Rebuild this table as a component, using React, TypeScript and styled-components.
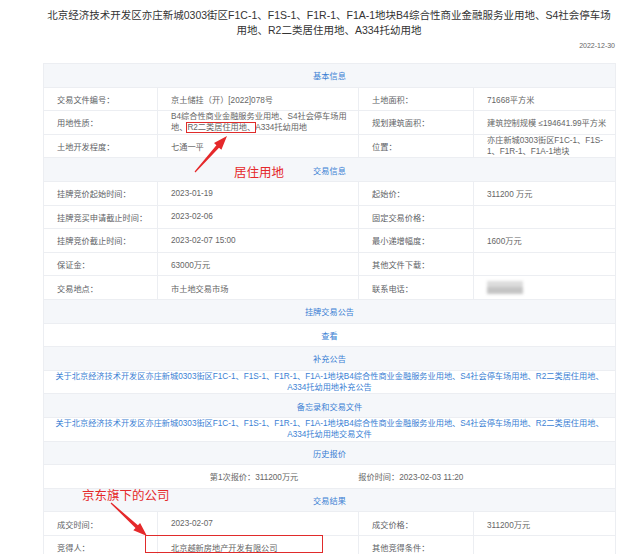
import * as React from "react";
import styled, { createGlobalStyle } from "styled-components";

const GlobalStyle = createGlobalStyle`
    html, body {
        margin: 0;
        padding: 0;
        background: #fff;
    }
    body {
        font-family: "Liberation Sans", "Noto Sans CJK SC", sans-serif;
    }
`;

type Point = { x: number; y: number };

// tapered red arrow, like the ones drawn in a screenshot editor
const arrowPoints = (tail: Point, tip: Point) => {
    const dx = tip.x - tail.x;
    const dy = tip.y - tail.y;
    const len = Math.sqrt(dx * dx + dy * dy);
    const ux = dx / len;
    const uy = dy / len;
    const nx = -uy;
    const ny = ux;
    const headLen = 14;
    const headHalf = 5;
    const base = { x: tip.x - ux * headLen, y: tip.y - uy * headLen };
    const pts: Point[] = [
        { x: tail.x + nx * 0.6, y: tail.y + ny * 0.6 },
        { x: base.x + nx * 1.8, y: base.y + ny * 1.8 },
        { x: base.x + nx * headHalf, y: base.y + ny * headHalf },
        tip,
        { x: base.x - nx * headHalf, y: base.y - ny * headHalf },
        { x: base.x - nx * 1.8, y: base.y - ny * 1.8 },
        { x: tail.x - nx * 0.6, y: tail.y - ny * 0.6 },
    ];
    return pts.map((p) => `${p.x.toFixed(1)},${p.y.toFixed(1)}`).join(" ");
};

const basicRows = [
    ["交易文件编号：", "京土储挂（开）[2022]078号", "土地面积：", "71668平方米"],
];

const tradeRows = [
    ["挂牌竞价起始时间：", "2023-01-19", "起始价：", "311200 万元"],
    ["挂牌竞买申请截止时间：", "2023-02-06", "固定交易价格：", ""],
    ["挂牌竞价截止时间：", "2023-02-07 15:00", "最小递增幅度：", "1600万元"],
    ["保证金：", "63000万元", "其他文件下载：", ""],
];

const App: React.FC = () => {
    return (
        <>
            <GlobalStyle />
            <Page>
                <Title>
                    北京经济技术开发区亦庄新城0303街区F1C-1、F1S-1、F1R-1、F1A-1地块B4综合性商业金融服务业用地、S4社会停车场
                    <br />
                    用地、R2二类居住用地、A334托幼用地
                </Title>
                <DateLine>2022-12-30</DateLine>

                <Table>
                    <SectionTitle>基本信息</SectionTitle>
                    {basicRows.map((r) => (
                        <InfoRow key={r[0]}>
                            <Cell $label>{r[0]}</Cell>
                            <Cell>{r[1]}</Cell>
                            <Cell $label>{r[2]}</Cell>
                            <Cell>{r[3]}</Cell>
                        </InfoRow>
                    ))}
                    <InfoRow>
                        <Cell $label>用地性质：</Cell>
                        <Cell>
                            <Multi>
                                B4综合性商业金融服务业用地、S4社会停车场用
                                <br />
                                地、<Marked>R2二类居住用地、</Marked>A334托幼用地
                            </Multi>
                        </Cell>
                        <Cell $label>规划建筑面积：</Cell>
                        <Cell>建筑控制规模 ≤194641.99平方米</Cell>
                    </InfoRow>
                    <InfoRow>
                        <Cell $label>土地开发程度：</Cell>
                        <Cell>七通一平</Cell>
                        <Cell $label>位置：</Cell>
                        <Cell>
                            <Multi>
                                亦庄新城0303街区F1C-1、F1S-
                                <br />
                                1、F1R-1、F1A-1地块
                            </Multi>
                        </Cell>
                    </InfoRow>

                    <SectionTitle>交易信息</SectionTitle>
                    {tradeRows.map((r) => (
                        <InfoRow key={r[0]}>
                            <Cell $label>{r[0]}</Cell>
                            <Cell>{r[1]}</Cell>
                            <Cell $label>{r[2]}</Cell>
                            <Cell>{r[3]}</Cell>
                        </InfoRow>
                    ))}
                    <InfoRow>
                        <Cell $label>交易地点：</Cell>
                        <Cell>市土地交易市场</Cell>
                        <Cell $label>联系电话：</Cell>
                        <Cell>
                            <Blurred />
                        </Cell>
                    </InfoRow>

                    <SectionTitle>挂牌交易公告</SectionTitle>
                    <FullRow $link>查看</FullRow>

                    <SectionTitle>补充公告</SectionTitle>
                    <FullRow $link>
                        <Multi>
                            关于北京经济技术开发区亦庄新城0303街区F1C-1、F1S-1、F1R-1、F1A-1地块B4综合性商业金融服务业用地、S4社会停车场用地、R2二类居住用地、
                            <br />
                            A334托幼用地补充公告
                        </Multi>
                    </FullRow>

                    <SectionTitle>备忘录和交易文件</SectionTitle>
                    <FullRow $link>
                        <Multi>
                            关于北京经济技术开发区亦庄新城0303街区F1C-1、F1S-1、F1R-1、F1A-1地块B4综合性商业金融服务业用地、S4社会停车场用地、R2二类居住用地、
                            <br />
                            A334托幼用地交易文件
                        </Multi>
                    </FullRow>

                    <SectionTitle>历史报价</SectionTitle>
                    <FullRow>
                        <Quote>
                            <span>第1次报价：311200万元</span>
                            <span>报价时间：2023-02-03 11:20</span>
                        </Quote>
                    </FullRow>

                    <SectionTitle>交易结果</SectionTitle>
                    <InfoRow>
                        <Cell $label>成交时间：</Cell>
                        <Cell>2023-02-07</Cell>
                        <Cell $label>成交价格：</Cell>
                        <Cell>311200万元</Cell>
                    </InfoRow>
                    <InfoRow>
                        <Cell $label>竞得人：</Cell>
                        <Cell>北京越新房地产开发有限公司</Cell>
                        <Cell $label>其他竞得条件：</Cell>
                        <Cell></Cell>
                    </InfoRow>
                </Table>

                {/* annotations drawn on top of the page */}
                <Arrows width="640" height="554" viewBox="0 0 640 554">
                    <polygon
                        points={arrowPoints({ x: 195, y: 172 }, { x: 227, y: 136 })}
                        fill="#e5292b"
                    />
                    <polygon
                        points={arrowPoints({ x: 111, y: 503 }, { x: 147, y: 536 })}
                        fill="#e5292b"
                    />
                </Arrows>
                <Note style={{ left: 234, top: 164 }}>居住用地</Note>
                <Note style={{ left: 82, top: 487 }}>京东旗下的公司</Note>
                <CompanyBox />
            </Page>
        </>
    );
};

const Page = styled.div`
    position: relative;
    width: 640px;
    height: 554px;
    overflow: hidden;
    background: #fff;
    padding-top: 8px;
    box-sizing: border-box;
`;

const Title = styled.div`
    margin: 0 25px 0 43px;
    text-align: center;
    font-size: 10.5px;
    line-height: 15px;
    color: #333;
    white-space: nowrap;
`;

const DateLine = styled.div`
    margin: 3px 25px 0 43px;
    text-align: right;
    font-size: 7px;
    line-height: 10px;
    color: #666;
`;

const Table = styled.div`
    margin: 12px 0 0 43px;
    width: 573px;
    border: 1px solid #eceef2;
    border-bottom: 0;
    box-sizing: border-box;
    font-size: 8.2px;
    color: #666;
`;

const SectionTitle = styled.div`
    height: 23.6px;
    display: flex;
    align-items: center;
    justify-content: center;
    background: #f5f7fa;
    color: #3b7fd4;
    border-bottom: 1px solid #eceef2;
    box-sizing: border-box;
`;

const InfoRow = styled.div`
    display: grid;
    grid-template-columns: 114px 201px 115px 141px;
    height: 23.6px;
    border-bottom: 1px solid #eceef2;
    box-sizing: border-box;
`;

const Cell = styled.div<{ $label?: boolean }>`
    display: flex;
    align-items: center;
    padding: 0 6px 0 13px;
    color: ${(p) => (p.$label ? "#606266" : "#666")};
    border-right: 1px solid #eceef2;
    white-space: nowrap;
    overflow: visible;
    &:last-child {
        border-right: 0;
    }
`;

const Multi = styled.div`
    line-height: 11px;
    white-space: nowrap;
`;

const FullRow = styled.div<{ $link?: boolean }>`
    height: 23.6px;
    display: flex;
    align-items: center;
    justify-content: center;
    text-align: center;
    color: ${(p) => (p.$link ? "#3b7fd4" : "#666")};
    border-bottom: 1px solid #eceef2;
    box-sizing: border-box;
`;

const Quote = styled.div`
    display: flex;
    gap: 60px;
    margin-left: 14px;
`;

const Marked = styled.span`
    outline: 1.5px solid #e02b2b;
    outline-offset: 0.5px;
`;

const Blurred = styled.div`
    width: 36px;
    height: 13px;
    background: linear-gradient(#dcdcdc 0 45%, #c4c4c4 45% 100%);
    filter: blur(1.5px);
`;

const Arrows = styled.svg`
    position: absolute;
    left: 0;
    top: 0;
    pointer-events: none;
`;

const Note = styled.div`
    position: absolute;
    font-family: "Noto Sans CJK SC", sans-serif;
    font-size: 12.5px;
    line-height: 16px;
    color: #e5292b;
    white-space: nowrap;
`;

const CompanyBox = styled.div`
    position: absolute;
    left: 145px;
    top: 535px;
    width: 178px;
    height: 18px;
    border: 1.5px solid #e02b2b;
    box-sizing: border-box;
`;

export default App;
